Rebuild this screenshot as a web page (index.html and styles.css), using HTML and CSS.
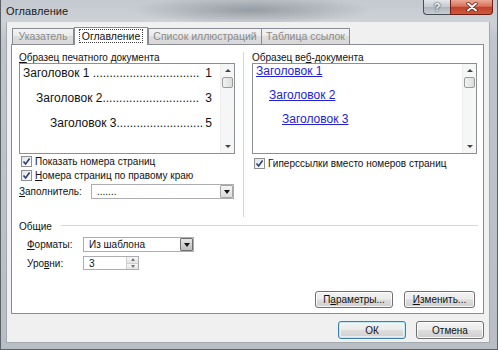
FILE: index.html
```html
<!DOCTYPE html>
<html lang="ru">
<head>
<meta charset="utf-8">
<title>Оглавление</title>
<link rel="stylesheet" href="styles.css">
</head>
<body>
<div class="window">
  <div class="titlebar">
    <span class="title">Оглавление</span>
    <div class="caption-btns">
      <div class="cbtn help">?</div>
      <div class="cbtn close">
        <svg width="14" height="10" viewBox="0 0 14 10"><path d="M3 1.5 L11 8.5 M11 1.5 L3 8.5" stroke="#5a1a10" stroke-width="3.4" stroke-linecap="round"/><path d="M3 1.5 L11 8.5 M11 1.5 L3 8.5" stroke="#ffffff" stroke-width="2" stroke-linecap="round"/></svg>
      </div>
    </div>
  </div>
  <div class="client">
    <div class="tabs">
      <div class="tab tab-1">Указатель</div>
      <div class="tab tab-2 active"><span class="focus">Оглавление</span></div>
      <div class="tab tab-3">Список иллюстраций</div>
      <div class="tab tab-4">Таблица ссылок</div>
    </div>
    <div class="panel">
      <div class="cols">
        <div class="col col-left">
          <div class="label"><u>О</u>бразец печатного документа</div>
          <div class="preview preview-left">
            <div class="preview-body">
              <div class="toc lv1"><span>Заголовок 1 ................................</span><span class="num">1</span></div>
              <div class="toc lv2"><span>Заголовок 2.............................</span><span class="num">3</span></div>
              <div class="toc lv3"><span>Заголовок 3..........................</span><span class="num">5</span></div>
            </div>
            <div class="vscroll">
              <div class="sb-btn"><span class="tri-up"></span></div>
              <div class="sb-thumb"></div>
              <div class="sb-track"></div>
              <div class="sb-btn"><span class="tri-down"></span></div>
            </div>
          </div>
          <div class="check"><span class="box"><svg width="9" height="9" viewBox="0 0 9 9"><path d="M1.5 4.5 L3.6 7 L7.6 1.5" fill="none" stroke="#2c3f73" stroke-width="1.6"/></svg></span>Показать номера страниц</div>
          <div class="check"><span class="box"><svg width="9" height="9" viewBox="0 0 9 9"><path d="M1.5 4.5 L3.6 7 L7.6 1.5" fill="none" stroke="#2c3f73" stroke-width="1.6"/></svg></span><u>Н</u>омера страниц по правому краю</div>
          <div class="field">
            <span class="field-label"><u>З</u>аполнитель:</span>
            <div class="combo combo-fill"><span class="combo-text">.......</span><span class="drop"><span class="tri-down dark"></span></span></div>
          </div>
        </div>
        <div class="col col-right">
          <div class="label">Образец ве<u>б</u>-документа</div>
          <div class="preview preview-right">
            <div class="preview-body">
              <div class="link lv1">Заголовок 1</div>
              <div class="link lv2">Заголовок 2</div>
              <div class="link lv3">Заголовок 3</div>
            </div>
            <div class="vscroll">
              <div class="sb-btn"><span class="tri-up"></span></div>
              <div class="sb-thumb"></div>
              <div class="sb-track"></div>
              <div class="sb-btn"><span class="tri-down"></span></div>
            </div>
          </div>
          <div class="check"><span class="box"><svg width="9" height="9" viewBox="0 0 9 9"><path d="M1.5 4.5 L3.6 7 L7.6 1.5" fill="none" stroke="#2c3f73" stroke-width="1.6"/></svg></span>Гиперссылки вместо номеров страниц</div>
        </div>
      </div>
      <div class="group">
        <div class="group-title"><span>Общие</span><span class="rule"></span></div>
        <div class="grow">
          <span class="grow-label"><u>Ф</u>орматы:</span>
          <div class="combo combo-format"><span class="combo-text">Из шаблона</span><span class="drop drop-dark"><span class="tri-down dark"></span></span></div>
        </div>
        <div class="grow">
          <span class="grow-label">Уро<u>в</u>ни:</span>
          <div class="spin"><span class="combo-text">3</span><span class="spin-btns"><span class="spin-btn"><span class="tri-up small"></span></span><span class="spin-btn"><span class="tri-down small"></span></span></span></div>
        </div>
      </div>
      <div class="panel-btns">
        <div class="btn btn-params">П<u>а</u>раметры...</div>
        <div class="btn btn-edit"><u>И</u>зменить...</div>
      </div>
    </div>
    <div class="dialog-btns">
      <div class="btn btn-dlg default">ОК</div>
      <div class="btn btn-dlg">Отмена</div>
    </div>
  </div>
</div>
</body>
</html>
```

FILE: styles.css
```css
* { box-sizing: border-box; }
html, body { margin: 0; padding: 0; }
body {
  width: 498px;
  height: 350px;
  overflow: hidden;
  font-family: "Liberation Sans", Arial, sans-serif;
  font-size: 10px;
  color: #111;
  background: #9da3a9;
}
u { text-decoration: underline; text-underline-offset: 1px; }

.window {
  width: 498px;
  height: 350px;
  display: flex;
  flex-direction: column;
  background:
    radial-gradient(ellipse 120px 14px at 250px 10px, rgba(110,116,124,0.55), rgba(110,116,124,0) 100%),
    linear-gradient(180deg, #c3c9cf 0, #cdd2d7 22px, #bfc5cb 40px, #b8bec4 100%);
  border: 1px solid #5d6268;
  border-top: none;
}

.titlebar {
  height: 22px;
  flex: none;
  display: flex;
  align-items: flex-start;
  justify-content: space-between;
  padding-left: 5px;
}
.title {
  font-size: 11px;
  line-height: 22px;
  color: #1b1b1b;
  letter-spacing: 0.1px;
}
.caption-btns {
  display: flex;
  margin-right: 4px;
}
.cbtn {
  height: 15px;
  border: 1px solid #4a4f55;
  border-top: none;
  display: flex;
  align-items: center;
  justify-content: center;
}
.help {
  width: 27px;
  border-radius: 0 0 0 4px;
  background: linear-gradient(180deg, #e3e6ea 0, #c4c9cf 50%, #aeb4bb 51%, #c8cdd2 100%);
  color: #fff;
  font-weight: bold;
  font-size: 11px;
  line-height: 14px;
  text-shadow: 0 0 1px #333, 0 0 2px #333;
  border-right: none;
}
.close {
  width: 43px;
  border-radius: 0 0 4px 0;
  background: linear-gradient(180deg, #eaa896 0, #d9735c 45%, #c2402a 52%, #d0573e 100%);
  border-color: #6b2016;
}

.client {
  flex: 1;
  margin: 0 7px 6px 5px;
  background: #f0f0f0;
  padding: 5px 5px 0 4px;
  display: flex;
  flex-direction: column;
  border: 1px solid #a3a9af;
  border-top: none;
}

.tabs {
  display: flex;
  align-items: flex-end;
  height: 17px;
  padding-left: 1px;
  position: relative;
  z-index: 1;
}
.tab {
  height: 16px;
  border: 1px solid #898c95;
  border-bottom: none;
  background: linear-gradient(180deg, #f2f2f2 0, #ebebeb 45%, #dddddd 50%, #d8d8d8 100%);
  color: #8a8a8a;
  font-size: 10.5px;
  line-height: 15px;
  text-align: center;
  white-space: nowrap;
}
.tab-1 { width: 62px; }
.tab-2 { width: 74px; }
.tab-3 { width: 114px; }
.tab-4 { width: 89px; margin-left: -1px; }
.tab.active {
  height: 18px;
  margin-bottom: -1px;
  background: #ffffff;
  color: #111;
  line-height: 17px;
}
.focus {
  border: 1px dotted #444;
  padding: 0 2px;
  line-height: 12px;
  display: inline-block;
}

.panel {
  height: 270px;
  flex: none;
  background: #ffffff;
  border: 1px solid #898c95;
  display: flex;
  flex-direction: column;
  padding: 7px 8px 5px 7px;
}

.cols {
  display: flex;
  height: 165px;
  flex: none;
}
.col-left {
  width: 225px;
  padding-right: 8px;
  border-right: 1px solid #d7d7d7;
}
.col-right {
  flex: 1;
  padding-left: 8px;
}
.label {
  height: 11px;
  line-height: 11px;
  white-space: nowrap;
}

.preview {
  height: 91px;
  border: 1px solid #8c8f94;
  display: flex;
  background: #fff;
}
.preview-left { width: 216px; }
.preview-right { width: 225px; }
.preview-body {
  flex: 1;
  min-width: 0;
  font-size: 12px;
}
.preview-left .preview-body { padding: 1px 8px 0 3px; }
.preview-right .preview-body { padding: 0 4px 0 3px; }

.toc {
  display: flex;
  height: 16px;
  line-height: 16px;
  margin-bottom: 9px;
  white-space: nowrap;
  color: #111;
}
.num { margin-left: auto; padding-left: 2px; }
.toc.lv2 { padding-left: 13px; }
.toc.lv3 { padding-left: 27px; }

.link {
  height: 14px;
  line-height: 14px;
  margin-bottom: 10px;
  color: #2222d4;
  text-decoration: underline;
  white-space: nowrap;
}
.link.lv2 { padding-left: 13px; }
.link.lv3 { padding-left: 26px; }

.vscroll {
  width: 14px;
  flex: none;
  display: flex;
  flex-direction: column;
  background: #f6f6f6;
  border-left: 1px solid #ededed;
}
.sb-btn {
  height: 13px;
  display: flex;
  align-items: center;
  justify-content: center;
}
.sb-thumb {
  height: 11px;
  margin: 0 1px;
  border: 1px solid #9b9b9b;
  border-radius: 2px;
  background: linear-gradient(90deg, #f2f2f2, #dcdcdc);
}
.sb-track { flex: 1; }

.tri-up, .tri-down {
  width: 0;
  height: 0;
  border-left: 3px solid transparent;
  border-right: 3px solid transparent;
}
.tri-up { border-bottom: 3px solid #444; }
.tri-down { border-top: 3px solid #444; }
.tri-down.dark { border-top-color: #111; border-left-width: 3.5px; border-right-width: 3.5px; border-top-width: 4px; }
.tri-up.small { border-bottom-color: #777; border-left-width: 2.5px; border-right-width: 2.5px; border-bottom-width: 3px; }
.tri-down.small { border-top-color: #777; border-left-width: 2.5px; border-right-width: 2.5px; border-top-width: 3px; }

.check {
  display: flex;
  align-items: center;
  height: 14px;
  padding-left: 2px;
  white-space: nowrap;
}
.col-left .check:first-of-type { margin-top: 2px; }
.col-right .check { margin-top: 2px; }
.box {
  width: 11px;
  height: 11px;
  border: 1px solid #8e8f8f;
  background: linear-gradient(135deg, #dfe4ea, #ffffff);
  margin-right: 3px;
  display: flex;
  align-items: center;
  justify-content: center;
  flex: none;
}

.field {
  display: flex;
  align-items: center;
  margin-top: 2px;
}
.field-label { width: 72px; }

.combo, .spin {
  height: 15px;
  border: 1px solid #abadb3;
  background: #fff;
  display: flex;
  align-items: stretch;
}
.combo-fill { width: 143px; }
.combo-format { width: 111px; }
.combo-text {
  flex: 1;
  padding-left: 5px;
  line-height: 13px;
  white-space: nowrap;
}
.drop {
  width: 13px;
  border: 1px solid #a6a6a6;
  border-radius: 1px;
  background: linear-gradient(180deg, #f4f4f4, #dcdcdc);
  display: flex;
  align-items: center;
  justify-content: center;
}
.drop-dark {
  border-color: #707070;
  background: linear-gradient(180deg, #e6e6e6, #bdbdbd);
}

.group {
  margin-top: 3px;
}
.group-title {
  display: flex;
  align-items: center;
  height: 13px;
  line-height: 13px;
  margin-right: -3px;
}
.rule {
  flex: 1;
  height: 1px;
  background: #d7d7d7;
  margin-left: 9px;
  margin-top: -2px;
}
.grow {
  display: flex;
  align-items: center;
  padding-left: 8px;
}
.grow:nth-of-type(2) { margin-top: 4px; }
.grow:nth-of-type(3) { margin-top: 4px; }
.grow-label { width: 56px; }
.spin { width: 56px; height: 14px; }
.spin-btns {
  width: 12px;
  display: flex;
  flex-direction: column;
  border-left: 1px solid #d0d0d0;
}
.spin-btn {
  flex: 1;
  display: flex;
  align-items: center;
  justify-content: center;
  background: linear-gradient(180deg, #f6f6f6, #e4e4e4);
}
.spin-btn + .spin-btn { border-top: 1px solid #d0d0d0; }

.panel-btns {
  margin-top: auto;
  display: flex;
  justify-content: flex-end;
  gap: 11px;
}
.btn {
  height: 17px;
  border: 1px solid #707070;
  border-radius: 3px;
  background: linear-gradient(180deg, #f3f3f3 0, #ebebeb 48%, #dddddd 52%, #cfcfcf 100%);
  box-shadow: inset 0 0 0 1px rgba(255,255,255,0.8);
  display: flex;
  align-items: center;
  justify-content: center;
  white-space: nowrap;
  color: #111;
}
.btn-params { width: 78px; }
.btn-edit { width: 71px; }

.dialog-btns {
  display: flex;
  justify-content: flex-end;
  gap: 10px;
  margin-top: 7px;
}
.btn-dlg { width: 68px; height: 18px; }
.btn.default {
  border-color: #3c7fb1;
  box-shadow: inset 0 0 0 1px #bde6f9, inset 0 0 0 2px rgba(255,255,255,0.6);
}
```
